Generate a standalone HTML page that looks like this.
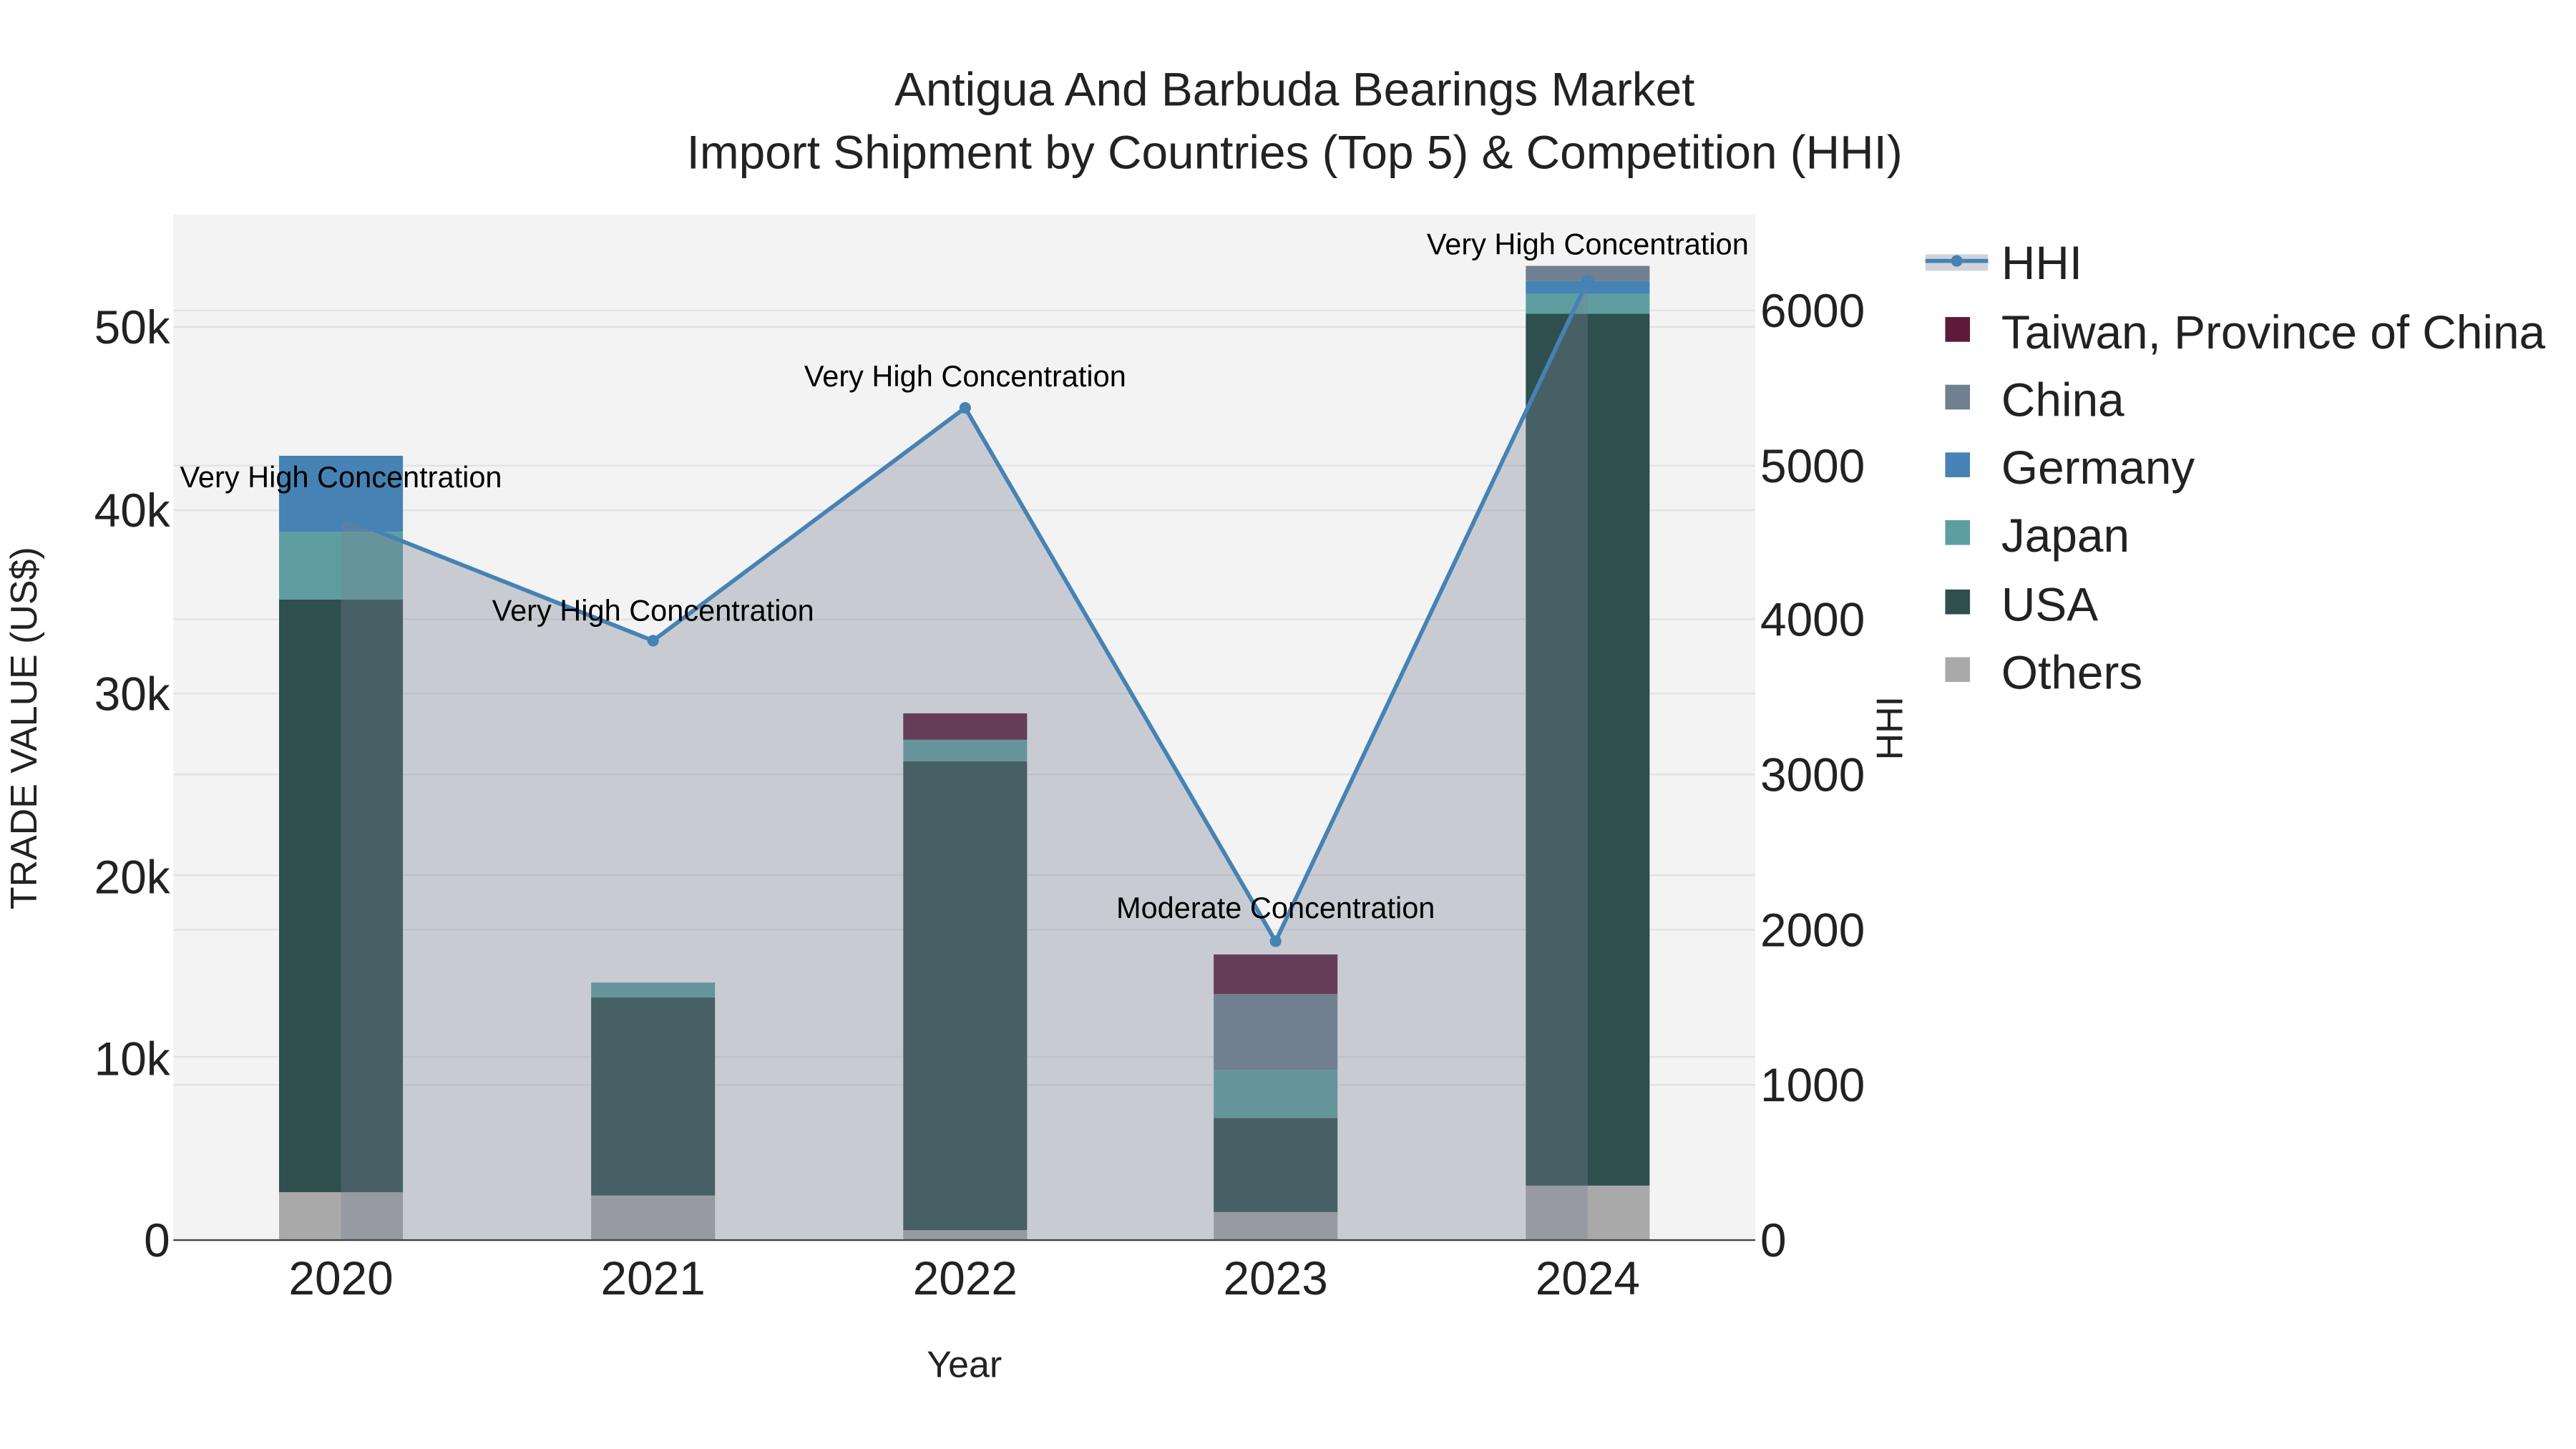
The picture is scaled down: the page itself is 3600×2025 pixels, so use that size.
<!DOCTYPE html>
<html><head><meta charset="utf-8"><style>html,body{margin:0;padding:0;background:#fff}svg{display:block}</style></head>
<body>
<svg width="3600" height="2025" viewBox="0 0 1560 877.5" xmlns="http://www.w3.org/2000/svg" font-family="Liberation Sans, Arial, sans-serif">
<rect width="1560" height="877.5" fill="#fff"/>
<rect x="105" y="130" width="958" height="621" fill="#f3f3f3"/>
<g stroke="#e2e2e2" stroke-width="1">
<line x1="105" x2="1063" y1="198" y2="198"/><line x1="105" x2="1063" y1="309" y2="309"/><line x1="105" x2="1063" y1="420" y2="420"/><line x1="105" x2="1063" y1="530" y2="530"/><line x1="105" x2="1063" y1="640" y2="640"/>
<line x1="105" x2="1063" y1="188" y2="188"/><line x1="105" x2="1063" y1="282" y2="282"/><line x1="105" x2="1063" y1="375" y2="375"/><line x1="105" x2="1063" y1="469" y2="469"/><line x1="105" x2="1063" y1="563" y2="563"/><line x1="105" x2="1063" y1="657" y2="657"/>
</g>
<g>
<rect x="169" y="722" width="75" height="29" fill="#a9a9a9"/>
<rect x="169" y="363" width="75" height="359" fill="#2f4f4f"/>
<rect x="169" y="322" width="75" height="41" fill="#5f9ea0"/>
<rect x="169" y="276" width="75" height="46" fill="#4682b4"/>
<rect x="358" y="724" width="75" height="27" fill="#a9a9a9"/>
<rect x="358" y="604" width="75" height="120" fill="#2f4f4f"/>
<rect x="358" y="595" width="75" height="9" fill="#5f9ea0"/>
<rect x="547" y="745" width="75" height="6" fill="#a9a9a9"/>
<rect x="547" y="461" width="75" height="284" fill="#2f4f4f"/>
<rect x="547" y="448" width="75" height="13" fill="#5f9ea0"/>
<rect x="547" y="432" width="75" height="16" fill="#5e1a3a"/>
<rect x="735" y="734" width="75" height="17" fill="#a9a9a9"/>
<rect x="735" y="677" width="75" height="57" fill="#2f4f4f"/>
<rect x="735" y="648" width="75" height="29" fill="#5f9ea0"/>
<rect x="735" y="602" width="75" height="46" fill="#708090"/>
<rect x="735" y="578" width="75" height="24" fill="#5e1a3a"/>
<rect x="924" y="718" width="75" height="33" fill="#a9a9a9"/>
<rect x="924" y="190" width="75" height="528" fill="#2f4f4f"/>
<rect x="924" y="178" width="75" height="12" fill="#5f9ea0"/>
<rect x="924" y="170" width="75" height="8" fill="#4682b4"/>
<rect x="924" y="161" width="75" height="9" fill="#708090"/>
</g>
<polygon points="206.5,313 395.5,388 584.5,247 772.5,570 961.5,170 961.5,751 206.5,751" fill="rgba(118,128,148,0.34)"/>
<polyline points="206.5,313 395.5,388 584.5,247 772.5,570 961.5,170" fill="none" stroke="#4682b4" stroke-width="2.5"/>
<g fill="#4682b4"><circle cx="206.5" cy="313" r="3.5"/><circle cx="395.5" cy="388" r="3.5"/><circle cx="584.5" cy="247" r="3.5"/><circle cx="772.5" cy="570" r="3.5"/><circle cx="961.5" cy="170" r="3.5"/></g>
<line x1="105" x2="1063" y1="751" y2="751" stroke="#444" stroke-width="1"/>
<g font-size="18" fill="#000" text-anchor="middle">
<text x="206.5" y="295">Very High Concentration</text>
<text x="395.5" y="376">Very High Concentration</text>
<text x="584.5" y="234">Very High Concentration</text>
<text x="772.5" y="556">Moderate Concentration</text>
<text x="961.5" y="154">Very High Concentration</text>
</g>
<g font-size="28.5" fill="#222" text-anchor="middle">
<text x="784" y="64">Antigua And Barbuda Bearings Market</text>
<text x="784" y="102">Import Shipment by Countries (Top 5) &amp; Competition (HHI)</text>
</g>
<g font-size="28.5" fill="#222" text-anchor="end">
<text x="103" y="761">0</text><text x="103" y="651">10k</text><text x="103" y="541">20k</text><text x="103" y="430">30k</text><text x="103" y="319">40k</text><text x="103" y="208">50k</text>
</g>
<g font-size="28.5" fill="#222" text-anchor="start">
<text x="1066" y="761">0</text><text x="1066" y="667">1000</text><text x="1066" y="573">2000</text><text x="1066" y="479">3000</text><text x="1066" y="385">4000</text><text x="1066" y="292">5000</text><text x="1066" y="198">6000</text>
</g>
<g font-size="28.5" fill="#222" text-anchor="middle">
<text x="206.5" y="784">2020</text><text x="395.5" y="784">2021</text><text x="584.5" y="784">2022</text><text x="772.5" y="784">2023</text><text x="961.5" y="784">2024</text>
</g>
<text x="584" y="834" font-size="22.5" fill="#222" text-anchor="middle">Year</text>
<text transform="translate(22,441) rotate(-90)" font-size="22.5" fill="#222" text-anchor="middle">TRADE VALUE (US$)</text>
<text transform="translate(1152,441) rotate(-90)" font-size="22.5" fill="#222" text-anchor="middle">HHI</text>
<rect x="1166" y="154" width="38" height="10" fill="rgba(118,128,148,0.34)"/>
<line x1="1166" x2="1204" y1="158" y2="158" stroke="#4682b4" stroke-width="2.5"/>
<circle cx="1185" cy="158" r="3.5" fill="#4682b4"/>
<rect x="1178" y="192" width="15" height="15" fill="#5e1a3a"/>
<rect x="1178" y="233" width="15" height="15" fill="#708090"/>
<rect x="1178" y="274" width="15" height="15" fill="#4682b4"/>
<rect x="1178" y="315" width="15" height="15" fill="#5f9ea0"/>
<rect x="1178" y="357" width="15" height="15" fill="#2f4f4f"/>
<rect x="1178" y="398" width="15" height="15" fill="#a9a9a9"/>
<g font-size="28.5" fill="#222">
<text x="1212" y="169">HHI</text>
<text x="1212" y="211">Taiwan, Province of China</text>
<text x="1212" y="252">China</text>
<text x="1212" y="293">Germany</text>
<text x="1212" y="334">Japan</text>
<text x="1212" y="376">USA</text>
<text x="1212" y="417">Others</text>
</g>
</svg>
</body></html>
